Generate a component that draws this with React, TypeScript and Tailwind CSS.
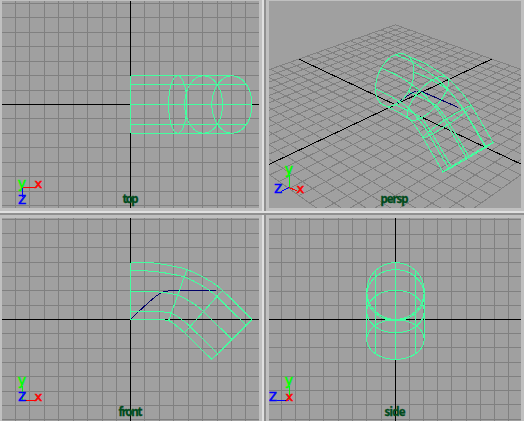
import React from "react";

type P3 = [number, number, number];
type P2 = [number, number];
type Project = (p: P3) => P2;

const GRID = "#808080";
const WIRE = "#43ff9f";
const CURVE = "#000066";

// Upper and lower profile of the bent tube in world units; stations 0, 3, 5 and 6 carry isoparms.
const profile: [P2, P2][] = [
  [[0, 3.95], [0, 0]],
  [[1.48, 3.93], [0.9, 0]],
  [[2.75, 3.74], [1.78, 0]],
  [[3.91, 3.46], [2.64, -0.08]],
  [[5.12, 2.9], [3.16, -0.42]],
  [[6.38, 2.03], [3.75, -0.92]],
  [[8.43, 0], [5.64, -2.77]],
];
const rings = [0, 3, 5, 6];
const curve: P3[] = [
  [0, 0, 0], [0.7, 0.68, 0], [1.3, 1.22, 0], [1.75, 1.6, 0],
  [2.1, 1.85, 0], [2.45, 1.96, 0], [2.9, 2, 0], [5.93, 2, 0],
];

function onTube(station: number, angle: number): P3 {
  const [t, b] = profile[station];
  const c = Math.cos(angle);
  return [
    (t[0] + b[0]) / 2 + ((t[0] - b[0]) / 2) * c,
    (t[1] + b[1]) / 2 + ((t[1] - b[1]) / 2) * c,
    1.99 * Math.sin(angle),
  ];
}

function toPath(points: P2[]) {
  return points.map(([x, y], i) => `${i ? "L" : "M"}${x.toFixed(2)} ${y.toFixed(2)}`).join("");
}

// Catmull-Rom interpolation through the bend, straight on the last span.
function longitudinal(angle: number): P3[] {
  const pts = profile.map((_, i) => onTube(i, angle));
  const out: P3[] = [pts[0]];
  for (let i = 0; i < pts.length - 1; i++) {
    if (i === pts.length - 2) {
      out.push(pts[i + 1]);
      break;
    }
    const a = pts[Math.max(0, i - 1)];
    const b = pts[i];
    const c = pts[i + 1];
    const d = pts[i + 2];
    for (let k = 1; k <= 5; k++) {
      const t = k / 5;
      out.push([0, 1, 2].map((j) =>
        0.5 * (2 * b[j] + (c[j] - a[j]) * t + (2 * a[j] - 5 * b[j] + 4 * c[j] - d[j]) * t * t +
          (3 * b[j] - a[j] - 3 * c[j] + d[j]) * t * t * t)) as P3);
    }
  }
  return out;
}

function Tube({ project, showCurve = true }: { project: Project; showCurve?: boolean }) {
  return (
    <g fill="none" stroke={WIRE} shapeRendering="crispEdges">
      {showCurve && <path d={toPath(curve.map(project))} stroke={CURVE} />}
      {rings.map((s) => (
        <path key={s} d={toPath(Array.from({ length: 49 }, (_, i) => project(onTube(s, (i / 48) * Math.PI * 2))))} />
      ))}
      {Array.from({ length: 8 }, (_, i) => (
        <path key={i} d={toPath(longitudinal((i * Math.PI) / 4).map(project))} />
      ))}
    </g>
  );
}

function OrthoGrid({ xs, ys, ox, oy }: { xs: number[]; ys: number[]; ox: number; oy: number }) {
  return (
    <g fill="none" shapeRendering="crispEdges">
      <path stroke={GRID} d={xs.map((x) => `M${x + 0.5} 0V421`).join("") + ys.map((y) => `M0 ${y + 0.5}H524`).join("")} />
      <path stroke="#000" d={`M${ox + 0.5} 0V421M0 ${oy + 0.5}H524`} />
    </g>
  );
}

function View({ box, children }: { box: string; children: React.ReactNode }) {
  return (
    <div className="min-w-0 min-h-0 bg-[#a0a0a0] overflow-hidden">
      <svg className="block h-full w-full" viewBox={box}>{children}</svg>
    </div>
  );
}

function Label({ x, y, width, children }: { x: number; y: number; width: number; children: string }) {
  return (
    <text x={x} y={y} textLength={width} fill="#004b1c" stroke="#004b1c" strokeWidth={0.3} className="font-['Noto_Sans',sans-serif] text-[11.5px] font-bold">
      {children}
    </text>
  );
}

const axisColor = { x: "#ff0000", y: "#00ff00", z: "#0000ff" };

function Axis({ name, x, y }: { name: "x" | "y" | "z"; x: number; y: number }) {
  const size = name === "z" ? "text-[11.5px]" : name === "y" ? "text-[14px]" : "text-[13px]";
  return (
    <text x={x} y={y} fill={axisColor[name]} stroke={axisColor[name]} strokeWidth={0.6} className={`font-['DejaVu_Sans',sans-serif] ${size}`}>
      {name === "z" ? "Z" : name}
    </text>
  );
}

function Line({ d, name }: { d: string; name: "x" | "y" | "z" }) {
  return <path d={d} fill="none" stroke={axisColor[name]} shapeRendering="crispEdges" />;
}

const U = 14.42;
const topProject: Project = ([x, , z]) => [130.5 + x * U, 104.5 + z * U];
const frontProject: Project = ([x, y]) => [130.5 + x * U, 319.5 - y * U];
const sideProject: Project = ([, y, z]) => [395.5 - z * U, 319.5 - y * U];
const ground: Project = ([x, y, z]) => {
  const w = 1 - 0.0138 * (x + z) - 0.0105 * y;
  return [395.3 + (9.37 * (x - z)) / w, 104.7 + (4.43 * (x + z) - 12 * y) / w];
};
const perspProject: Project = ([x, y, z]) => ground([x * 1.01, y * 1.01, z * 1.01]);

const steps = Array.from({ length: 25 }, (_, i) => i - 12);
const leftCols = [15, 29, 44, 58, 73, 87, 102, 116, 144, 159, 173, 188, 202, 217, 231, 245];
const rightCols = [281, 295, 309, 323, 338, 352, 366, 381, 409, 423, 437, 451, 466, 480, 494, 508];
const topRows = [3, 17, 32, 46, 61, 75, 90, 118, 133, 147, 162, 176, 191, 205];
const frontRows = [219, 233, 247, 262, 276, 290, 305, 333, 348, 362, 376, 391, 405, 419];
const sideRows = [219, 234, 248, 262, 276, 291, 305, 333, 347, 362, 376, 390, 404, 419];

function TopView() {
  return (
    <View box="2 1 257 207">
      <OrthoGrid xs={leftCols} ys={topRows} ox={130} oy={104} />
      <Tube project={topProject} showCurve={false} />
      <Axis name="y" x={17.7} y={188} />
      <Line name="x" d="M23 187.5H36" />
      <Line name="z" d="M22.5 188V197" />
      <Axis name="x" x={34.6} y={187.5} />
      <Axis name="z" x={18.2} y={203.7} />
      <Label x={122.5} y={202.5} width={16}>top</Label>
    </View>
  );
}

function PerspView() {
  return (
    <View box="269 1 252 207">
      <g fill="none" shapeRendering="crispEdges">
        <path
          stroke={GRID}
          d={steps.map((s) => toPath([ground([s, 0, -12]), ground([s, 0, 12])]) + toPath([ground([-12, 0, s]), ground([12, 0, s])])).join("")}
        />
        <path stroke="#000" d={toPath([ground([-12, 0, 0]), ground([12, 0, 0])]) + toPath([ground([0, 0, -12]), ground([0, 0, 12])])} />
      </g>
      <Tube project={perspProject} />
      <Line name="y" d="M289.5 187V175" />
      <Line name="x" d="M289 187.5L297 191" />
      <Line name="z" d="M289 187.5L281 191.5" />
      <Axis name="y" x={284.7} y={173.5} />
      <Axis name="x" x={296.6} y={192.7} />
      <Axis name="z" x={274.3} y={193} />
      <Label x={380.5} y={202.5} width={28}>persp</Label>
    </View>
  );
}

function FrontView() {
  return (
    <View box="2 218 257 203">
      <OrthoGrid xs={leftCols} ys={frontRows} ox={130} oy={319} />
      <Tube project={frontProject} />
      <Line name="y" d="M22.5 386V400" />
      <Line name="x" d="M23 400.5H36" />
      <Axis name="y" x={17.7} y={384.5} />
      <Axis name="x" x={34.6} y={400.7} />
      <Axis name="z" x={18.2} y={401} />
      <Label x={118.5} y={416} width={24}>front</Label>
    </View>
  );
}

function SideView() {
  return (
    <View box="269 218 252 203">
      <OrthoGrid xs={rightCols} ys={sideRows} ox={395} oy={319} />
      <Tube project={sideProject} showCurve={false} />
      <Line name="y" d="M289.5 386V400" />
      <Line name="z" d="M277 400.5H289" />
      <Axis name="y" x={284.7} y={384.5} />
      <Axis name="x" x={285.6} y={400.7} />
      <Axis name="z" x={269} y={401} />
      <Label x={384.5} y={416} width={21}>side</Label>
    </View>
  );
}

export default function App() {
  return (
    <div className="flex h-[421px] w-[524px] flex-col overflow-hidden bg-[#c0c0c0]">
      <div className="flex h-[211px]">
        <div className="grid w-[262px] pt-px pr-[3px] pb-[3px] pl-0.5"><TopView /></div>
        <div className="w-0.5 bg-[#e0e0e0]" />
        <div className="w-0.5 bg-[#909090]" />
        <div className="grid w-[258px] px-[3px] pt-px pb-[3px]"><PerspView /></div>
      </div>
      <div className="h-0.5 bg-[#e0e0e0]" />
      <div className="h-0.5 bg-[#909090]" />
      <div className="flex h-[206px]">
        <div className="grid w-[262px] pt-[3px] pr-[3px] pl-0.5"><FrontView /></div>
        <div className="w-0.5 bg-[#e0e0e0]" />
        <div className="w-0.5 bg-[#909090]" />
        <div className="grid w-[258px] px-[3px] pt-[3px]"><SideView /></div>
      </div>
    </div>
  );
}
